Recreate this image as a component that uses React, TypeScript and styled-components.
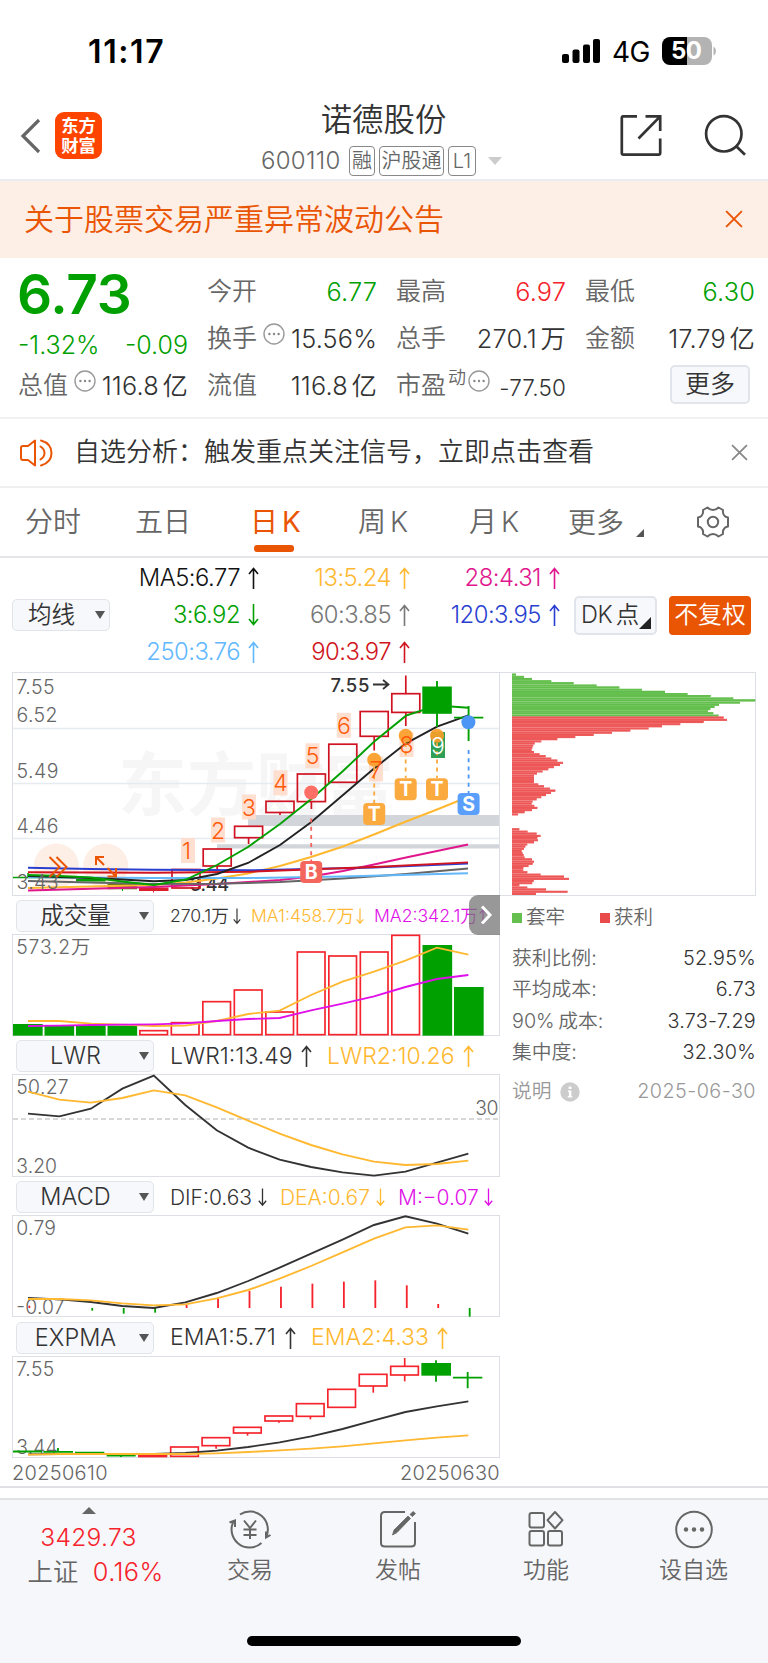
import React from 'react';
import styled, { createGlobalStyle } from 'styled-components';

const GREEN = '#00a000';
const RED = '#f5232b';
const ORANGE = '#ea5504';
const AMBER = '#ffb830';
const MAGENTA = '#e010e8';
const INK = '#333333';
const GREY = '#666666';
const FONT = `Inter, 'Noto Sans CJK SC', sans-serif`;

const GlobalStyle = createGlobalStyle`
  body { margin: 0; background: #fff; }
  * { box-sizing: border-box; }
`;

const Page = styled.div`
  width: 768px;
  height: 1663px;
  display: flex;
  flex-direction: column;
  overflow: hidden;
  background: #fff;
  color: ${INK};
  font-family: ${FONT};
  font-weight: 350;
  line-height: 1;
  white-space: nowrap;
  svg { display: block; flex: none; overflow: visible; }
  svg text { font-family: ${FONT}; }
`;

/* ---------- status bar ---------- */
const StatusBar = styled.div`
  height: 100px;
  padding: 2px 52px 0 88px;
  display: flex;
  align-items: center;
  color: #000;
`;
const Clock = styled.div`
  flex: 1;
  padding-top: 1px;
  font-size: 32px;
  font-weight: 600;
  letter-spacing: 1.6px;
`;
const Network = styled.div`
  width: 38px;
  margin: 2px 12px 0 12px;
  font-size: 28px;
  font-weight: 400;
  letter-spacing: -0.6px;
`;

/* ---------- header ---------- */
const Header = styled.header`
  height: 81px;
  display: grid;
  grid-template-columns: 180px 1fr 180px;
  border-bottom: 2px solid #eaecef;
`;
const HeaderLeft = styled.div`
  display: flex;
  align-items: center;
  padding: 0 0 8px 20px;
  gap: 14px;
  height: 79px;
`;
const Logo = styled.div`
  width: 47px;
  height: 47px;
  border-radius: 9px;
  background: #ff4400;
  color: #fff;
  display: flex;
  flex-direction: column;
  align-items: center;
  justify-content: center;
  font-size: 17.3px;
  font-weight: 700;
  line-height: 19.5px;
`;
const HeaderRight = styled.div`
  display: flex;
  justify-content: flex-end;
  padding: 15px 22px 0 0;
  gap: 42px;
`;
const Title = styled.div`
  display: flex;
  flex-direction: column;
  align-items: center;
`;
const StockName = styled.h1`
  margin: 5px 0 9px -1px;
  font-size: 31.4px;
  font-weight: 350;
`;
const StockMeta = styled.div`
  display: flex;
  align-items: center;
  height: 32px;
  font-size: 24px;
  color: ${GREY};
  margin-left: -5px;
`;
const Code = styled.span`
  width: 88px;
  letter-spacing: 0.3px;
`;
const Tag = styled.span<{ $w: number }>`
  width: ${p => p.$w}px;
  height: 30px;
  margin-right: 4px;
  border: 1.5px solid #888;
  border-radius: 4px;
  display: flex;
  align-items: center;
  justify-content: center;
  font-size: 20px;
`;

const Banner = styled.div`
  height: 77px;
  padding: 0 25px 1px 24px;
  display: flex;
  align-items: center;
  justify-content: space-between;
  background: #fdeee6;
  color: ${ORANGE};
  font-size: 30px;
`;

/* ---------- quote ---------- */
const Quote = styled.section`
  height: 161px;
  padding: 8px 12px 0 18px;
  display: grid;
  grid-template-columns: 170px 170px 170px 170px;
  column-gap: 19px;
  border-bottom: 2px solid #f0f1f3;
`;
const QuoteCol = styled.div`
  display: flex;
  flex-direction: column;
`;
const Price = styled.div`
  height: 59px;
  font-size: 55px;
  font-weight: 600;
  line-height: 57px;
  letter-spacing: -0.3px;
  color: ${GREEN};
  margin-left: -1px;
`;
const Change = styled.div`
  height: 35px;
  padding-top: 8px;
  display: flex;
  justify-content: space-between;
  font-size: 25px;
  letter-spacing: 0;
  color: ${GREEN};
`;
const Cell = styled.div`
  height: 47px;
  padding-top: 3px;
  display: flex;
  align-items: center;
  font-size: 25px;
`;
const Label = styled.span`
  color: ${GREY};
`;
const Sup = styled.span`
  font-size: 18px;
  color: ${GREY};
  margin: -15px 2px 0 2px;
`;
const DotSlot = styled.span<{ $ml?: number }>`
  margin: -9px 0 0 ${p => p.$ml ?? 6}px;
`;
const Value = styled.span<{ $c?: string; $small?: boolean }>`
  margin-left: auto;
  color: ${p => p.$c ?? INK};
  font-size: ${p => (p.$small ? 22.5 : 25.3)}px;
  padding-top: ${p => (p.$small ? 6 : 1)}px;
  letter-spacing: 0.15px;
  word-spacing: -3.5px;
`;
const MoreButton = styled.button`
  margin: -2px 5px 0 auto;
  width: 80px;
  height: 39px;
  padding: 0;
  border: 2px solid #e1e4ea;
  border-radius: 5px;
  background: #f7f8fb;
  color: ${INK};
  font: 350 25px ${FONT};
  line-height: 1;
`;

const Notice = styled.div`
  height: 69px;
  padding: 0 20px;
  display: flex;
  align-items: center;
  border-bottom: 2px solid #eeeff1;
  font-size: 26px;
`;
const NoticeText = styled.span`
  flex: 1;
  margin: -1px 0 0 21px;
`;

/* ---------- tabs ---------- */
const Tabs = styled.nav`
  height: 70px;
  padding-left: 25px;
  display: flex;
  border-bottom: 2px solid #e4e6ea;
`;
const Tab = styled.div<{ $w: number; $active?: boolean }>`
  width: ${p => p.$w}px;
  padding-top: 20px;
  font-size: 28px;
  word-spacing: -4px;
  color: ${p => (p.$active ? ORANGE : GREY)};
  font-weight: ${p => (p.$active ? 400 : 350)};
`;
const Underline = styled.div`
  width: 40px;
  height: 7px;
  margin: 9px 0 0 4px;
  border-radius: 3px;
  background: ${ORANGE};
`;
const TabMore = styled.div`
  display: flex;
  align-items: flex-end;
  height: 29px;
  gap: 12px;
`;

/* ---------- moving averages ---------- */
const MaBar = styled.div`
  height: 114px;
  padding-left: 12px;
  display: flex;
  align-items: center;
`;
const Select = styled.div<{ $w: number }>`
  width: ${p => p.$w}px;
  height: 32px;
  flex: none;
  display: flex;
  align-items: center;
  padding-right: 4px;
  border: 1.5px solid #e1e4e9;
  border-radius: 5px;
  background: #f7f8fb;
  font-size: 23.5px;
`;
const SelectLabel = styled.span`
  flex: 1;
  padding-right: 5px;
  text-align: center;
`;
const MaGrid = styled.div`
  display: grid;
  grid-template-columns: 149px 151px 150px;
  grid-auto-rows: 37px;
`;
const Ma = styled.div<{ $c: string }>`
  display: flex;
  align-items: center;
  justify-content: flex-end;
  gap: 8px;
  font-size: 23.8px;
  letter-spacing: -0.5px;
  color: ${p => p.$c};
`;
const DkButton = styled.div`
  width: 83px;
  height: 39px;
  margin: 0 12px 0 14px;
  padding: 0 4px 4px 5px;
  display: flex;
  align-items: flex-end;
  border: 2px solid #e1e4ea;
  border-radius: 5px;
  background: #f7f8fb;
  font-size: 23.5px;
  letter-spacing: -0.3px;
  word-spacing: -3px;
  line-height: 29px;
`;
const AdjustButton = styled.div`
  width: 82px;
  height: 39px;
  border-radius: 4px;
  background: ${ORANGE};
  color: #fff;
  font-size: 23.8px;
  line-height: 38px;
  text-align: center;
`;

/* ---------- chart area ---------- */
const Charts = styled.section`
  height: 816px;
  padding-left: 12px;
  display: flex;
  border-bottom: 2px solid #dfe1e4;
`;
const LeftCharts = styled.div`
  width: 488px;
`;
const Plot = styled.div<{ $h: number }>`
  height: ${p => p.$h}px;
  border: 1px solid #dcdfe5;
`;
const Strip = styled.div<{ $h: number; $size: number }>`
  position: relative;
  height: ${p => p.$h}px;
  padding: 2px 0 0 4px;
  display: flex;
  align-items: center;
  font-size: ${p => p.$size}px;
`;
const Metric = styled.span<{ $c: string; $w: number; $ml: number }>`
  width: ${p => p.$w}px;
  flex: none;
  margin-left: ${p => p.$ml}px;
  display: flex;
  align-items: center;
  justify-content: space-between;
  color: ${p => p.$c};
`;
const Expander = styled.div`
  position: absolute;
  right: 0;
  top: -1px;
  width: 31px;
  height: 40px;
  padding-left: 3px;
  border-radius: 9px 0 0 9px;
  background: rgba(120, 120, 120, 0.76);
  display: flex;
  align-items: center;
  justify-content: center;
`;
const Dates = styled.div`
  display: flex;
  justify-content: space-between;
  height: 29px;
  align-items: center;
  font-size: 20px;
  letter-spacing: 0.3px;
  color: ${GREY};
`;

const RightPanel = styled.aside`
  width: 256px;
`;
const ChipPlot = styled.div`
  height: 224px;
  border: 1px solid #dcdfe5;
  border-left: none;
`;
const Legend = styled.div`
  height: 44px;
  padding-left: 12px;
  display: flex;
  align-items: center;
  font-size: 19.5px;
  color: ${GREY};
`;
const Swatch = styled.i<{ $c: string; $ml?: number }>`
  width: 10px;
  height: 10px;
  margin: 0 4px 0 ${p => p.$ml ?? 0}px;
  background: ${p => p.$c};
`;
const Stats = styled.div`
  padding-top: 3px;
`;
const Stat = styled.div<{ $muted?: boolean }>`
  height: ${p => (p.$muted ? 46 : 31.4)}px;
  padding-left: 12px;
  display: flex;
  align-items: center;
  justify-content: space-between;
  font-size: 19.8px;
  word-spacing: -2px;
  color: ${p => (p.$muted ? '#999' : GREY)};
  span:last-child {
    color: ${p => (p.$muted ? '#999' : INK)};
    letter-spacing: ${p => (p.$muted ? 0.45 : 0.25)}px;
  }
`;
const StatName = styled.span`
  display: flex;
  align-items: center;
  gap: 8px;
  font-size: 19.8px;
`;

/* ---------- bottom nav ---------- */
const BottomNav = styled.footer`
  margin-top: 10px;
  height: 165px;
  border-top: 2px solid #e0e2e5;
  background: #f6f7fa;
  display: flex;
  flex-direction: column;
`;
const NavRow = styled.div`
  height: 136px;
  padding-left: 1px;
  display: grid;
  grid-template-columns: 175px 148px 148px 148px 147px;
`;
const IndexCell = styled.div`
  display: flex;
  flex-direction: column;
  align-items: center;
  padding-top: 7px;
  font-size: 24.6px;
  color: ${RED};
`;
const IndexValue = styled.div`
  margin: 11px 0 9px;
  letter-spacing: 0.3px;
`;
const IndexLine = styled.div`
  display: flex;
  align-items: center;
  gap: 14px;
  margin-left: 14px;
  font-size: 25.3px;
  letter-spacing: 0.4px;
`;
const NavItem = styled.div`
  display: flex;
  flex-direction: column;
  align-items: center;
  padding-top: 10px;
  font-size: 23px;
  color: ${GREY};
  gap: 11px;
`;
const HomeBar = styled.div`
  width: 274px;
  height: 10px;
  margin-left: 247px;
  border-radius: 5px;
  background: #000;
`;

/* ---------- small drawings ---------- */
const Arrow = ({ down, h = 22, w = 11 }: { down?: boolean; h?: number; w?: number }) => (
  <svg width={w} height={h} viewBox="0 0 11 22" fill="none" stroke="currentColor" strokeWidth="1.6"
    transform={down ? 'rotate(180)' : undefined}>
    <path d="M5.5 22V1.5M1 7L5.5 1.5L10 7" />
  </svg>
);
const Caret = () => (
  <svg width="10" height="8" viewBox="0 0 10 8"><path d="M0 0H10L5 8Z" fill="#555" /></svg>
);
const Cross = ({ s, c }: { s: number; c: string }) => (
  <svg width={s} height={s} viewBox="0 0 16 16" stroke={c} strokeWidth="1.7"><path d="M1 1L15 15M15 1L1 15" /></svg>
);
const Dots = () => (
  <svg width="22" height="22" viewBox="0 0 22 22" fill="none" stroke="#999" strokeWidth="1.4">
    <circle cx="11" cy="11" r="10" />
    <g fill="#888" stroke="none"><circle cx="6.4" cy="11" r="1.2" /><circle cx="11" cy="11" r="1.2" /><circle cx="15.6" cy="11" r="1.2" /></g>
  </svg>
);
const CornerMark = ({ s, c }: { s: number; c: string }) => (
  <svg width={s} height={s} viewBox="0 0 8 8"><path d="M8 0V8H0Z" fill={c} /></svg>
);

/* ---------- chart data ---------- */
type Pt = [number, number];
const path = (p: Pt[]) => p.map(q => q.join(',')).join(' ');
const series = (ys: number[]) => ys.map((y, i) => `${84 + i * 94.36},${y}`).join(' ');

const maLines: { c: string; p: Pt[] }[] = [
  { c: '#ffb830', p: [[28, 888], [90, 886.5], [154, 885], [186, 882.5], [217, 878.5], [248, 873.5], [280, 866], [311, 857], [343, 846.5], [374, 834.5], [406, 821.5], [437, 809.5], [468, 797]] },
  { c: '#e0168c', p: [[28, 890.5], [154, 887], [217, 884], [280, 880], [311, 876.5], [343, 871], [374, 864.5], [406, 857.5], [437, 851], [468, 844.5]] },
  { c: '#666666', p: [[28, 881], [90, 882.5], [154, 884], [217, 883.8], [280, 882], [343, 878.5], [406, 874], [468, 868.5]] },
  { c: '#62b8f8', p: [[28, 877.3], [154, 878], [250, 878], [343, 876.5], [468, 873.3]] },
  { c: '#2a3fd0', p: [[28, 867.7], [90, 869], [154, 869.7], [250, 870.3], [374, 867.5], [468, 863.6]] },
  { c: '#d01420', p: [[28, 872.3], [154, 872.7], [250, 871.7], [374, 867], [468, 862.4]] },
  { c: '#222222', p: [[28, 876], [90, 878], [122, 879.5], [154, 881.3], [186, 880], [217, 874], [248, 863], [280, 845], [311, 822.3], [343, 795], [374, 768.5], [406, 743.3], [437, 726.7], [468.3, 715.3]] },
  { c: '#00a000', p: [[28, 875], [60, 876], [91, 877.5], [122, 881.5], [154, 885], [186, 879.5], [217, 865], [248, 847], [280, 824], [311, 799.3], [343, 771], [374, 741.7], [406, 715.7], [437, 705.5], [468.3, 707.7]] },
];
// [x, top, bottom, wick top, wick bottom]
const mainCandles: number[][] = [
  [172, 869.5, 888, 869.5, 888], [203.2, 849, 866, 849, 871], [234.6, 826.3, 837.7, 826.3, 844], [266, 801.3, 812.5, 801.3, 815],
  [297.4, 774, 801.6, 774, 809], [328.8, 744.2, 782.3, 744.2, 782.3], [360.2, 711.5, 736.3, 711.5, 750.5], [391.8, 693.7, 712.4, 675.5, 726],
];
const counts: [string, number, number][] = [
  ['1', 181, 838], ['2', 211, 817.5], ['3', 242, 794.5], ['4', 273.5, 770.3], ['5', 305.5, 743.3], ['6', 336.8, 712.8], ['7', 369, 756.5], ['8', 399.5, 732],
];
const signals: [string, number, number, string][] = [
  ['T', 374.2, 814, '#fbaa40'], ['T', 405.7, 789.2, '#fbaa40'], ['T', 437, 789.2, '#fbaa40'], ['S', 468.6, 804, '#5a9ffb'], ['B', 311.2, 872, '#f4655c'],
];
const volumes = [402, 406, 406, 407, 422, 398, 335, 300, 366, 186, 198, 186, 136, 165, 291];
const macd = [377, 384, 392, 401, 398, 375, 353, 333, 320, 311, 305, 301, 316, 372, 410];
// [top, bottom, wick top, wick bottom]
const emaCandles: number[][] = [
  [801, 829, 801, 829], [773, 797, 773, 806], [742, 759, 742, 767], [708, 723, 708, 728], [671, 709, 671, 718],
  [628, 682, 628, 682], [583, 618, 583, 638], [559, 585, 534, 604],
];
const chips = [
  48, 72, 96, 154, 221, 290, 358, 426, 495, 563, 632, 700, 766, 720, 657, 644, 631, 624, 640, 656,
  671, 681, 611, 541, 486, 446, 391, 336, 281, 226, 172, 124, 104, 100, 97, 95, 102, 119, 137, 154, 172, 189, 180, 162, 145, 128, 111,
  102, 102, 102, 102, 115, 132, 150, 166, 153, 138, 124, 110, 98, 95, 103, 112, 96, 74, 54,
  36, 36, 36, 36, 36, 36,
  58, 83, 110, 122, 112, 114, 102, 82, 76, 72, 65, 68, 71, 74, 96, 102, 98, 86, 70, 70, 82, 122, 192, 207, 101, 97, 58, 82, 138, 203, 108,
];
const CHIP_STEP = 664 / 103;

const MainPlot = () => (
  <svg width="486" height="222" viewBox="13 673 486 222" fill="none">
    <text x="118" y="810" fontSize="69" fontWeight="600" fill="#f6f6f6" textLength="276">东方财富</text>
    <path d="M13 728.5H499M13 783.5H499M13 838.5H499" stroke="#e6ebf1" strokeWidth="1.6" />
    <path d="M248 815H499V826H248ZM217 844.3H499V848.6H217Z" fill="#d2d6da" />
    <circle cx="56.3" cy="866" r="22.5" fill="#fdeee6" />
    <circle cx="105.7" cy="866" r="22.5" fill="#fdeee6" />
    {counts.map(([n, x, y]) => (
      <rect key={n} x={x} y={y} width="14" height="25" fill="#ffdccb" opacity="0.9" />
    ))}
    <rect x="431" y="732" width="14" height="26" fill="#2f9f55" />
    <g fontSize="19.5" fill={GREY}>
      <text x="16.500" y="694" textLength="38">7.55</text>
      <text x="16.500" y="722" textLength="41">6.52</text>
      <text x="16.500" y="777.5" textLength="42">5.49</text>
      <text x="16.500" y="833" textLength="42">4.46</text>
    </g>
    <text x="330.500" y="691.500" fontSize="18.500" fontWeight="500" fill={INK} textLength="39">7.55</text>
    <path d="M373 684.500H388M383 680L388.500 684.500L383 689" stroke={INK} strokeWidth="1.8" />
    <text x="190" y="890.500" fontSize="18" fontWeight="500" fill={INK} textLength="39">3.44</text>
    <g stroke="#cf1322" strokeWidth="1.7">
      {mainCandles.map(([x, t, b, wt, wb]) => (
        <React.Fragment key={x}>
          <rect x={x} y={t} width="28" height={b - t} />
          {wt < t && <path d={`M${x + 14} ${wt}V${t}`} />}
          {wb > b && <path d={`M${x + 14} ${b}V${wb}`} />}
        </React.Fragment>
      ))}
    </g>
    <path d="M13 877.500H42.500M28 873V878M45 877.500H74M60 873V878" stroke={GREEN} strokeWidth="1.5" />
    <path d="M76 879H105.500V881.500H76Z" fill={GREEN} />
    <path d="M107.500 884H137V889.300H107.500Z" fill="#6b7a14" />
    <path d="M122.500 889V891" stroke={GREEN} />
    <path d="M139 887.500H168.500V891H139Z" fill="#dc1e2c" />
    <path d="M153.500 891V892.500" stroke="#dc1e2c" />
    {maLines.map(l => <polyline key={l.c} points={path(l.p)} stroke={l.c} strokeWidth="1.9" />)}
    <text x="16.500" y="889" fontSize="19.500" fill={GREY} textLength="42">3.43</text>
    <g stroke={ORANGE} strokeWidth="2">
      <path d="M49.500 857L59.500 867L49.500 877M56.500 857L66.500 867L56.500 877" />
      <path d="M96 865V857H104M96 857L104 865M116 868V876.500H107.500M116 876.500L107.500 868" />
    </g>
    <rect x="422.3" y="686.5" width="29.500" height="27.300" fill={GREEN} />
    <path d="M437 681V727M468.600 706V741M454 717.600H483.300" stroke={GREEN} strokeWidth="1.9" />
    <g fill="#fb9d28" fillOpacity="0.92">
      <circle cx="374.2" cy="759.7" r="7" /><circle cx="405.700" cy="735.700" r="7" /><circle cx="437" cy="735.700" r="7" />
    </g>
    <circle cx="311.200" cy="792.500" r="7" fill="#ff6f66" />
    <circle cx="468.400" cy="722.300" r="7" fill="#4c96f5" />
    <g strokeWidth="1.8" strokeDasharray="4 4.2">
      <path d="M374.200 767V803M405.700 743V778M437 743V778" stroke="#fba83c" />
      <path d="M311.200 818.500V861" stroke="#f4655c" />
      <path d="M468.600 750V793" stroke="#4c96f5" />
    </g>
    <g fontSize="23" fill="#ff5a0a" textAnchor="middle">
      {counts.map(([n, x, y]) => <text key={n} x={x + (n === '1' ? 5.500 : 7)} y={y + 21}>{n}</text>)}
      <text x="438" y="753.500" fill="#fff">9</text>
    </g>
    {signals.map(([s, x, y, c]) => (
      <g key={s + x}>
        <rect x={x - 11} y={y - 11} width="22" height="22" rx="4" fill={c} />
        <text x={x} y={y + 7} fontSize="19.500" fontWeight="700" fill="#fff" textAnchor="middle">{s}</text>
      </g>
    ))}
  </svg>
);

const VolumePlot = () => (
  <svg width="486" height="100" viewBox="39 135 1458 300" fill="none">
    <text x="49" y="193" fontSize="58" fill={GREY} textLength="222">573.2万</text>
    {volumes.map((t, i) => {
      const solid = i < 4 || i > 12;
      const x = 39 + i * 94.5;
      return solid
        ? <rect key={i} x={x} y={t} width="89" height={437 - t} fill={GREEN} />
        : <rect key={i} x={x + 2.500} y={t} width="83" height={434 - t} stroke="#f5232b" strokeWidth="5" />;
    })}
    <polyline points={series([393, 393, 401, 404, 408, 407, 393, 372, 362, 315, 275, 245, 212, 173, 194])} stroke={AMBER} strokeWidth="5.600" />
    <polyline points={series([408, 407, 405, 404, 403, 400, 393, 387, 384, 361, 341, 319, 291, 267, 255])} stroke={MAGENTA} strokeWidth="5.600" />
  </svg>
);

const LwrPlot = () => (
  <svg width="486" height="101" viewBox="39 555 1458 303" fill="none">
    <path d="M39 687H1497" stroke="#cccccc" strokeWidth="5" strokeDasharray="15 9" />
    <g fontSize="58" fill={GREY}>
      <text x="49" y="613" textLength="157">50.27</text>
      <text x="49" y="848" textLength="122">3.20</text>
      <text x="1426" y="675" textLength="69">30</text>
    </g>
    <polyline points={series([671, 679, 656, 596, 557, 645, 721, 773, 809, 831, 847, 857, 845, 818, 791])} stroke="#333" strokeWidth="5.600" />
    <polyline points={series([605, 629, 638, 624, 601, 616, 652, 692, 731, 765, 793, 815, 825, 822, 812])} stroke={AMBER} strokeWidth="5.600" />
  </svg>
);

const MacdPlot = () => (
  <svg width="486" height="100" viewBox="39 108 1458 300" fill="none">
    <g fontSize="58" fill={GREY}>
      <text x="49" y="166" textLength="119">0.79</text>
      <text x="49" y="401" textLength="145">-0.07</text>
    </g>
    <g strokeWidth="5.500">
      {macd.map((y, i) => <path key={i} d={`M${88 + i * 94.36} 384V${y}`} stroke={y > 384 ? GREEN : '#f5232b'} />)}
    </g>
    <polyline points={series([354, 358, 366, 378, 384, 367, 339, 303, 263, 221, 179, 135, 109, 131, 161])} stroke="#333" strokeWidth="5.600" />
    <polyline points={series([357, 357, 361, 370, 376, 373, 355, 330, 296, 258, 217, 176, 142, 136, 149])} stroke={AMBER} strokeWidth="5.600" />
  </svg>
);

const ExpmaPlot = () => (
  <svg width="486" height="100" viewBox="39 531 1458 300" fill="none">
    <g fontSize="58" fill={GREY}>
      <text x="49" y="589" textLength="114">7.55</text>
      <text x="49" y="822" textLength="124">3.44</text>
    </g>
    <g stroke="#f5232b" strokeWidth="5">
      {emaCandles.map(([t, b, wt, wb], i) => {
        const x = 512 + i * 94.3;
        return (
          <React.Fragment key={i}>
            <rect x={x} y={t} width="83" height={b - t} />
            {wt < t && <path d={`M${x + 42} ${wt}V${t}`} />}
            {wb > b && <path d={`M${x + 42} ${b}V${wb}`} />}
          </React.Fragment>
        );
      })}
    </g>
    <rect x="414" y="825" width="88" height="7" fill="#f5232b" />
    <path d="M39 814.500H126M130 815.500H219M174 804V816M225 818H313M320 827H407M363 827V831M1359 593H1447M1403 576V625M1308 541V605" stroke={GREEN} strokeWidth="5.500" />
    <rect x="1264" y="549" width="89" height="38" fill={GREEN} />
    <polyline points={series([823, 822, 822, 822, 822, 819, 812, 801, 787, 769, 747, 721, 696, 679, 664])} stroke="#333" strokeWidth="5.600" />
    <polyline points={series([824, 822, 822, 822, 822, 822, 820, 816, 811, 806, 799, 790, 781, 773, 766])} stroke={AMBER} strokeWidth="5.600" />
  </svg>
);

const ChipChart = () => (
  <svg width="255" height="222" viewBox="0 279 765 666">
    {chips.map((x, i) => (
      <g key={i}>
        <rect x="36" y={281 + i * CHIP_STEP} width={x - 36} height={CHIP_STEP} fill={i < 20 ? '#66c04f' : '#ee5a5a'} />
        {i % 2 === 0 && <rect x="36" y={281 + i * CHIP_STEP} width={x - 36} height="2.500" fill={i < 20 ? '#60bc4a' : '#ec5252'} />}
      </g>
    ))}
  </svg>
);

const stats = [['获利比例:', '52.95%'], ['平均成本:', '6.73'], ['90% 成本:', '3.73-7.29'], ['集中度:', '32.30%']];

export default function App() {
  return (
    <Page>
      <GlobalStyle />
      <StatusBar>
        <Clock>11:17</Clock>
        <svg width="38" height="24" viewBox="0 0 38 24">
          <rect x="0" y="15" width="7" height="9" rx="2" /><rect x="10.500" y="10.500" width="7" height="13.500" rx="2" />
          <rect x="21" y="5.500" width="7" height="18.500" rx="2" /><rect x="31" y="0" width="7" height="24" rx="2" />
        </svg>
        <Network>4G</Network>
        <svg width="54" height="28" viewBox="0 0 54 28">
          <defs><clipPath id="cell"><rect width="50" height="28" rx="8" /></clipPath></defs>
          <g clipPath="url(#cell)"><rect width="25" height="28" /><rect x="25" width="25" height="28" fill="#b3b3b3" /></g>
          <path d="M51.500 9.500Q54 11 54 14T51.500 18.500Z" fill="#b3b3b3" />
          <text x="24.500" y="22.300" fontSize="24" fontWeight="700" fill="#fff" textAnchor="middle" textLength="31">50</text>
        </svg>
      </StatusBar>

      <Header>
        <HeaderLeft>
          <svg width="21" height="36" viewBox="0 0 21 36" fill="none" stroke="#666" strokeWidth="3.200"><path d="M19 2L3 18L19 34" /></svg>
          <Logo><span>东方</span><span>财富</span></Logo>
        </HeaderLeft>
        <Title>
          <StockName>诺德股份</StockName>
          <StockMeta>
            <Code>600110</Code>
            <Tag $w={26}>融</Tag><Tag $w={65}>沪股通</Tag><Tag $w={28}>L1</Tag>
            <svg width="14" height="8" viewBox="0 0 14 8" style={{ marginLeft: 8 }}><path d="M0 0H14L7 8Z" fill="#ccc" /></svg>
          </StockMeta>
        </Title>
        <HeaderRight>
          <svg width="43" height="43" viewBox="0 0 43 43" fill="none" stroke="#333" strokeWidth="2.700">
            <path d="M17 1.400H3Q1.800 1.400 1.800 3V38Q1.800 39.700 3.500 39.700H38.500Q40.200 39.700 40.200 38V23.500M25.500 1.400H40.200V16M40.200 1.400L18.500 23.500" />
          </svg>
          <svg width="41" height="43" viewBox="0 0 41 43" fill="none" stroke="#333" strokeWidth="2.700">
            <circle cx="18.800" cy="18.800" r="17.700" /><path d="M31 31L40 39.800" />
          </svg>
        </HeaderRight>
      </Header>

      <Banner><span>关于股票交易严重异常波动公告</span><Cross s={18} c={ORANGE} /></Banner>

      <Quote>
        <QuoteCol>
          <Price>6.73</Price>
          <Change><span>-1.32%</span><span>-0.09</span></Change>
          <Cell><Label>总值</Label><DotSlot><Dots /></DotSlot><Value>116.8 亿</Value></Cell>
        </QuoteCol>
        <QuoteCol>
          <Cell><Label>今开</Label><Value $c={GREEN}>6.77</Value></Cell>
          <Cell><Label>换手</Label><DotSlot><Dots /></DotSlot><Value>15.56%</Value></Cell>
          <Cell><Label>流值</Label><Value>116.8 亿</Value></Cell>
        </QuoteCol>
        <QuoteCol>
          <Cell><Label>最高</Label><Value $c={RED}>6.97</Value></Cell>
          <Cell><Label>总手</Label><Value>270.1 万</Value></Cell>
          <Cell><Label>市盈</Label><Sup>动</Sup><DotSlot $ml={0}><Dots /></DotSlot><Value $small>-77.50</Value></Cell>
        </QuoteCol>
        <QuoteCol>
          <Cell><Label>最低</Label><Value $c={GREEN}>6.30</Value></Cell>
          <Cell><Label>金额</Label><Value>17.79 亿</Value></Cell>
          <Cell><MoreButton>更多</MoreButton></Cell>
        </QuoteCol>
      </Quote>

      <Notice>
        <svg width="33" height="28" viewBox="0 0 33 28" fill="none" stroke={ORANGE} strokeWidth="2" strokeLinejoin="round" strokeLinecap="round">
          <path d="M15 1.500V26.500L8 21H3Q1 21 1 19V9Q1 7 3 7H8Z" />
          <path d="M20.500 7.500Q24.500 10 24.500 14T20.500 20.500M21 1.500Q31.500 4.500 31.500 14T21 26.500" />
        </svg>
        <NoticeText>自选分析：触发重点关注信号，立即点击查看</NoticeText>
        <Cross s={17} c="#888" />
      </Notice>

      <Tabs>
        <Tab $w={110}>分时</Tab>
        <Tab $w={115}>五日</Tab>
        <Tab $w={108} $active>日 K<Underline /></Tab>
        <Tab $w={111}>周 K</Tab>
        <Tab $w={99}>月 K</Tab>
        <Tab $w={129}><TabMore>更多<CornerMark s={8} c="#555" /></TabMore></Tab>
        <svg width="32" height="32" viewBox="0 0 32 32" fill="none" stroke="#666" strokeWidth="2" strokeLinejoin="round" style={{ marginTop: 18 }}>
          <path d="M10.500 1.500Q13 4 16 4T21.500 1.500L26 4Q25.500 8 27.500 9.800Q28.500 11 31 11.500V20.500Q28.500 21 27.500 22.200Q25.500 24 26 28L21.500 30.500Q19 28 16 28T10.500 30.500L6 28Q6.500 24 4.500 22.200Q3.500 21 1 20.500V11.500Q3.500 11 4.500 9.800Q6.500 8 6 4Z" />
          <circle cx="16" cy="16" r="5.200" />
        </svg>
      </Tabs>

      <MaBar>
        <Select $w={98}><SelectLabel>均线</SelectLabel><Caret /></Select>
        <MaGrid>
          <Ma $c="#111">MA5:6.77<Arrow /></Ma><Ma $c={AMBER}>13:5.24<Arrow /></Ma><Ma $c="#e0168c">28:4.31<Arrow /></Ma>
          <Ma $c={GREEN}>3:6.92<Arrow down /></Ma><Ma $c="#777">60:3.85<Arrow /></Ma><Ma $c="#2a3fd0">120:3.95<Arrow /></Ma>
          <Ma $c="#62b8ff">250:3.76<Arrow /></Ma><Ma $c="#d01420">90:3.97<Arrow /></Ma>
        </MaGrid>
        <DkButton>DK 点<CornerMark s={12} c="#222" /></DkButton>
        <AdjustButton>不复权</AdjustButton>
      </MaBar>

      <Charts>
        <LeftCharts>
          <Plot $h={224}><MainPlot /></Plot>
          <Strip $h={38} $size={17.6}>
            <Select $w={138}><SelectLabel>成交量</SelectLabel><Caret /></Select>
            <Metric $c={INK} $w={71} $ml={16}>270.1万<Arrow down h={17} w={8} /></Metric>
            <Metric $c={AMBER} $w={113} $ml={10}>MA1:458.7万<Arrow down h={17} w={8} /></Metric>
            <Metric $c={MAGENTA} $w={113} $ml={10}>MA2:342.1万<Arrow h={17} w={8} /></Metric>
            <Expander><svg width="12" height="20" viewBox="0 0 12 20" fill="none" stroke="#fff" strokeWidth="3"><path d="M2 1.500L10 10L2 18.500" /></svg></Expander>
          </Strip>
          <Plot $h={102}><VolumePlot /></Plot>
          <Strip $h={38} $size={23}>
            <Select $w={138}><SelectLabel>LWR</SelectLabel><Caret /></Select>
            <Metric $c={INK} $w={142} $ml={16}>LWR1:13.49<Arrow /></Metric>
            <Metric $c={AMBER} $w={147} $ml={15}>LWR2:10.26<Arrow /></Metric>
          </Strip>
          <Plot $h={103}><LwrPlot /></Plot>
          <Strip $h={38} $size={21}>
            <Select $w={138}><SelectLabel>MACD</SelectLabel><Caret /></Select>
            <Metric $c={INK} $w={97} $ml={16}>DIF:0.63<Arrow down h={19} w={9} /></Metric>
            <Metric $c={AMBER} $w={105} $ml={13}>DEA:0.67<Arrow down h={19} w={9} /></Metric>
            <Metric $c={MAGENTA} $w={95} $ml={13}>M:−0.07<Arrow down h={19} w={9} /></Metric>
          </Strip>
          <Plot $h={102}><MacdPlot /></Plot>
          <Strip $h={39} $size={23}>
            <Select $w={138}><SelectLabel>EXPMA</SelectLabel><Caret /></Select>
            <Metric $c={INK} $w={126} $ml={16}>EMA1:5.71<Arrow /></Metric>
            <Metric $c={AMBER} $w={137} $ml={15}>EMA2:4.33<Arrow /></Metric>
          </Strip>
          <Plot $h={102}><ExpmaPlot /></Plot>
          <Dates><span>20250610</span><span>20250630</span></Dates>
        </LeftCharts>
        <RightPanel>
          <ChipPlot><ChipChart /></ChipPlot>
          <Legend><Swatch $c="#66c04f" />套牢<Swatch $c="#e94b4b" $ml={35} />获利</Legend>
          <Stats>
            {stats.map(([k, v]) => <Stat key={k}><StatName>{k}</StatName><span>{v}</span></Stat>)}
            <Stat $muted>
              <StatName>说明
                <svg width="20" height="20" viewBox="0 0 20 20"><circle cx="10" cy="10" r="9.700" fill="#ccc" /><path d="M8.600 4.500H11.400V7H8.600ZM8 8.500H11.400V14H12.300V15.500H7.700V14H8.900V10H8Z" fill="#fff" /></svg>
              </StatName>
              <span>2025-06-30</span>
            </Stat>
          </Stats>
        </RightPanel>
      </Charts>

      <BottomNav>
        <NavRow>
          <IndexCell>
            <svg width="14" height="7" viewBox="0 0 14 7"><path d="M7 0L14 7H0Z" fill="#666" /></svg>
            <IndexValue>3429.73</IndexValue>
            <IndexLine><Label>上证</Label>0.16%</IndexLine>
          </IndexCell>
          <NavItem>
            <svg width="42" height="38" viewBox="0 0 42 38" fill="none" stroke="#666" strokeWidth="2">
              <path d="M11 4.500A18 18 0 0 1 37 27.500M32.500 33A18 18 0 0 1 5 10.500M0.500 12.500L6 10.500V17M41.500 25L37 27.500L37 21.500" />
              <path d="M15 10.500L21 18L27 10.500M21 18V29M14.500 19.500H27.500M14.500 25H27.500" />
            </svg>
            交易
          </NavItem>
          <NavItem>
            <svg width="36" height="38" viewBox="0 0 36 38" fill="none" stroke="#666" strokeWidth="2">
              <path d="M25 2H5Q1 2 1 6V33Q1 36.500 5 36.500H31Q35 36.500 35 33V12" />
              <path d="M12.500 25L14 20L28 6L30.500 8.500L17 22.500ZM30 4.500L33 1.500L35.500 3.500L32.500 6.500Z" fill="#666" strokeWidth="0.800" />
            </svg>
            发帖
          </NavItem>
          <NavItem>
            <svg width="36" height="38" viewBox="0 0 36 38" fill="none" stroke="#666" strokeWidth="2">
              <rect x="1.500" y="3" width="14.500" height="14.500" rx="2" /><rect x="1.500" y="21" width="14.500" height="14.500" rx="2" />
              <rect x="20" y="21" width="14" height="14.500" rx="2" /><path d="M27 2L34.500 10.200L27 18.500L19.500 10.200Z" strokeLinejoin="round" />
            </svg>
            功能
          </NavItem>
          <NavItem>
            <svg width="38" height="38" viewBox="0 0 38 38" fill="none" stroke="#666" strokeWidth="2">
              <circle cx="19" cy="19.500" r="17.800" />
              <g fill="#666" stroke="none"><circle cx="11" cy="19.500" r="2.200" /><circle cx="19" cy="19.500" r="2.200" /><circle cx="27" cy="19.500" r="2.200" /></g>
            </svg>
            设自选
          </NavItem>
        </NavRow>
        <HomeBar />
      </BottomNav>
    </Page>
  );
}
